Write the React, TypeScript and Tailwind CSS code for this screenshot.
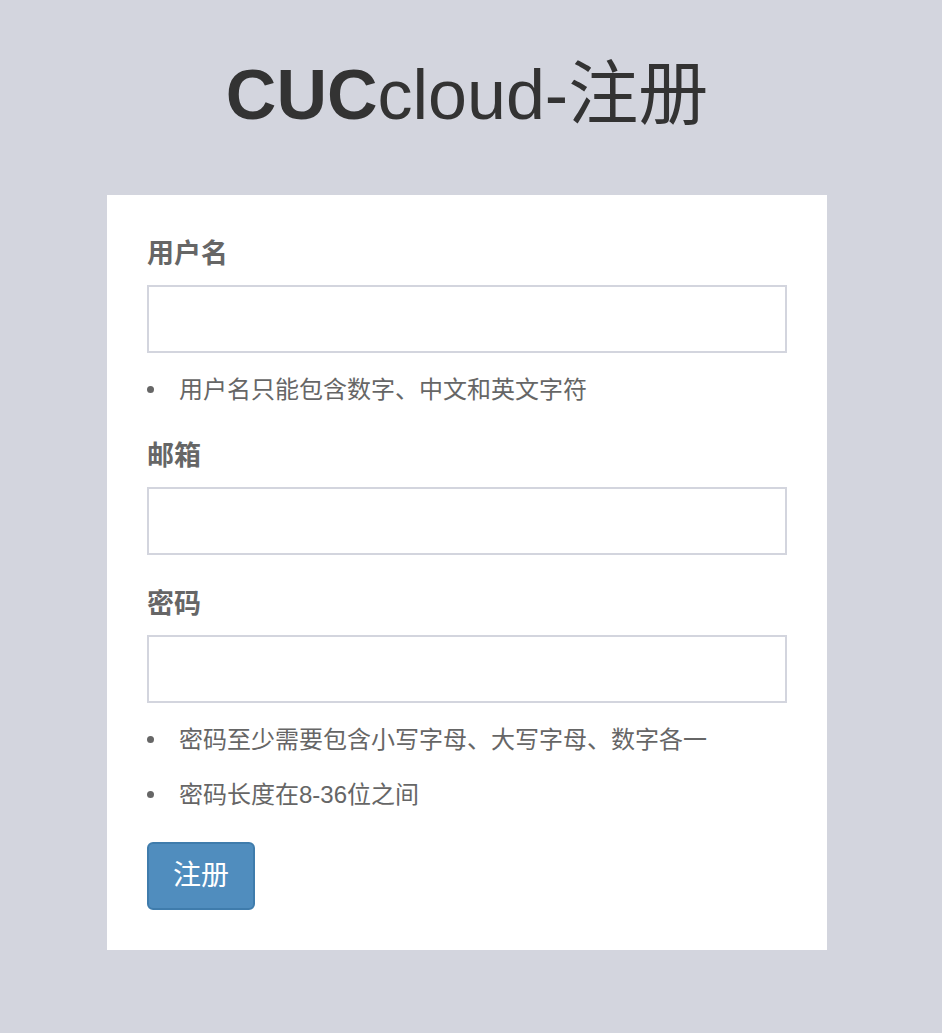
import React from "react";

const font = { fontFamily: '"Liberation Sans", Arial, "Noto Sans CJK SC", sans-serif' };

function Label({ children }: { children: React.ReactNode }) {
  return (
    <label className="block text-[27px] leading-[36px] font-bold text-[#666666]">{children}</label>
  );
}

function Input({ type = "text" }: { type?: string }) {
  return (
    <input
      type={type}
      className="mt-[13px] block h-[68px] w-full border-2 border-[#d3d5de] bg-white px-6 text-[28px] text-[#555] outline-none"
    />
  );
}

function Hint({ children, className = "" }: { children: React.ReactNode; className?: string }) {
  return (
    <li className={"flex items-center text-[24px] leading-[33px] text-[#666666] " + className}>
      <span className="mr-[25px] inline-block h-[7px] w-[7px] rounded-full bg-[#666666]" />
      <span>{children}</span>
    </li>
  );
}

export default function App() {
  return (
    <div className="min-h-[1033px] bg-[#d3d5de]" style={font}>
      <div className="w-[934px] pt-[55px] pb-[83px]">
        <h1 className="text-center text-[70px] leading-[80px] font-normal text-[#333333]">
          <span className="font-bold">CUC</span>cloud-注册
        </h1>
        <div className="mx-auto mt-[60px] w-[720px] bg-white px-10 pt-[41px] pb-[40px]">
          <form onSubmit={(e) => e.preventDefault()}>
            <Label>用户名</Label>
            <Input />
            <ul className="mt-[20px]">
              <Hint>用户名只能包含数字、中文和英文字符</Hint>
            </ul>
            <div className="mt-[32px]">
              <Label>邮箱</Label>
              <Input type="email" />
            </div>
            <div className="mt-[31px]">
              <Label>密码</Label>
              <Input type="password" />
            </div>
            <ul className="mt-[20px]">
              <Hint>密码至少需要包含小写字母、大写字母、数字各一</Hint>
              <Hint className="mt-[22px]">密码长度在8-36位之间</Hint>
            </ul>
            <button
              type="submit"
              className="mt-[31px] block h-[68px] w-[108px] rounded-[6px] border-2 border-[#3f7cac] bg-[#508dbe] text-[28px] leading-[28px] text-white"
            >
              注册
            </button>
          </form>
        </div>
      </div>
    </div>
  );
}
